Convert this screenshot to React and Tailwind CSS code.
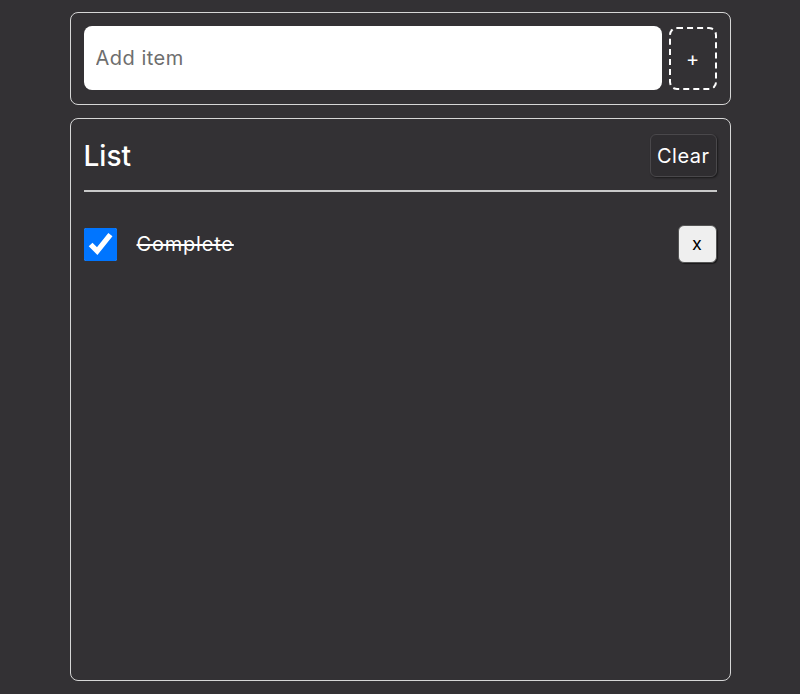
import { useState } from "react";

export default function App() {
  const [items, setItems] = useState([{ id: 1, text: "Complete", done: true }]);

  return (
    <div className="min-h-[694px] w-full bg-[#333134] font-['Inter','Noto_Sans',sans-serif] pt-3">
      <div className="w-[661px] mx-auto flex flex-col gap-[13px]">
        {/* add row */}
        <div className="flex flex-row gap-[7px] border border-[#d6d6d6] rounded-lg p-[13px] pb-[14px]">
          <input
            type="text"
            placeholder="Add item"
            className="flex-1 h-[64px] bg-white rounded-lg px-3 text-xl tracking-wide text-[#222] placeholder:text-[#6e6e6e] outline-none"
          />
          <button className="w-[48px] h-[63px] mt-[1px] border-2 border-dashed border-white rounded-lg text-white text-xl">
            +
          </button>
        </div>

        {/* list */}
        <div className="h-[563px] border border-[#d6d6d6] rounded-lg px-[13px] pt-[15px]">
          <div className="flex flex-row items-center justify-between pb-[13px] border-b-2 border-[#c9c9c9]">
            <h2 className="text-[28px] font-medium text-white leading-none">List</h2>
            <button
              className="h-[43px] px-[6px] text-xl tracking-wide text-white bg-[#2f2d30] border border-[#4a484b] rounded-md shadow-[1px_1px_2px_rgba(0,0,0,0.5)]"
              onClick={() => setItems([])}
            >
              Clear
            </button>
          </div>

          <div className="flex flex-col pt-[33px]">
            {items.map((i) => (
              <div key={i.id} className="flex flex-row items-center justify-between">
                <div className="flex flex-row items-center gap-5">
                  <input
                    type="checkbox"
                    checked={i.done}
                    readOnly
                    className="w-[33px] h-[33px] m-0"
                  />
                  <span className={"text-xl tracking-[0.04em] text-white " + (i.done ? "line-through" : "")}>
                    {i.text}
                  </span>
                </div>
                <button
                  className="w-[39px] h-[38px] bg-[#efefef] text-black text-lg border border-[#555] rounded-md shadow-[1px_1px_1px_rgba(0,0,0,0.5)]"
                  onClick={() => setItems(items.filter((x) => x.id !== i.id))}
                >
                  x
                </button>
              </div>
            ))}
          </div>
        </div>
      </div>
    </div>
  );
}
